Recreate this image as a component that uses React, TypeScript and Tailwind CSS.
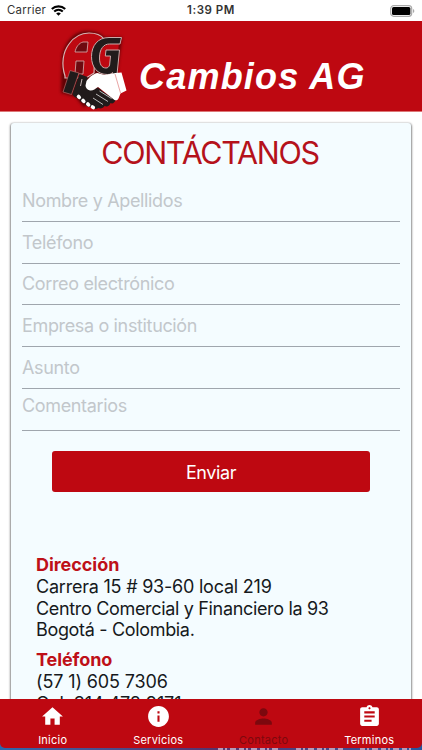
import { MdAssignment, MdHome, MdInfo, MdPerson } from 'react-icons/md';

const fields = [
    { name: 'nombre', label: 'Nombre y Apellidos', box: 'h-[42px] pb-[1px]' },
    { name: 'telefono', label: 'Teléfono', box: 'h-[42px] pb-[1px]' },
    { name: 'correo', label: 'Correo electrónico', box: 'h-[41px] pb-[1px]' },
    { name: 'empresa', label: 'Empresa o institución', box: 'h-[42px] pb-[1px]' },
    { name: 'asunto', label: 'Asunto', box: 'h-[42px] pb-[1px]' },
    { name: 'comentarios', label: 'Comentarios', box: 'h-[42px] pb-[9px]' },
];

const tabs = [
    { label: 'Inicio', icon: MdHome, active: false },
    { label: 'Servicios', icon: MdInfo, active: false },
    { label: 'Contacto', icon: MdPerson, active: true },
    { label: 'Terminos', icon: MdAssignment, active: false },
];

function StatusBar() {
    return (
        <div className="grid h-[21px] shrink-0 grid-cols-3 items-center bg-white px-[7px] pt-px text-[#333]">
            <div className="flex items-center gap-[5px]">
                <span className="text-[11.4px] tracking-[0.25px]">Carrier</span>
                <svg width="15" height="11" viewBox="0 0 15 11" fill="none" stroke="#000" strokeWidth="2.1">
                    <path d="M0.8 4.1C4.6 0.5 10.4 0.5 14.2 4.1" />
                    <path d="M3.2 6.6C5.7 4.3 9.3 4.3 11.8 6.6" />
                    <path d="M7.5 10.8L5.2 8.4C6.5 7.2 8.5 7.2 9.8 8.4Z" fill="#000" stroke="none" />
                </svg>
            </div>
            <span className="text-center text-[11.5px] font-semibold tracking-[0.55px]">1:39 PM</span>
            <svg className="justify-self-end" width="25" height="12" viewBox="0 0 25 12">
                <rect x="0.7" y="0.7" width="21" height="10.6" rx="3" fill="#fff" stroke="#aaa" strokeWidth="1.2" />
                <rect x="2" y="2" width="18.4" height="8" rx="1.6" fill="#000" />
                <path d="M23 4v4c1.8-.8 1.8-3.2 0-4z" fill="#aaa" />
            </svg>
        </div>
    );
}

// Monograma sobre el apretón de manos
function Logo() {
    return (
        <svg width="70" height="84" viewBox="0 0 70 84" className="shrink-0">
            <defs>
                <filter id="glow" x="-20%" y="-20%" width="140%" height="140%">
                    <feGaussianBlur stdDeviation="1.8" />
                </filter>
            </defs>
            <path
                d="M4 64L5 27C9 13 17 4 30 4c8 0 13 3 16 6h17l-5 37-20 20-12 11-8-10z"
                fill="#3a0306"
                stroke="#3a0306"
                strokeWidth="2"
                opacity="0.7"
                filter="url(#glow)"
            />
            {/* A */}
            <path
                d="M7 48C3 36 5 24 11 16 16 9 23 5 31 5c7 0 12 2 15 6l-9 12-1 22-8 5H7z"
                fill="#be0811"
                stroke="#d7b4b4"
                strokeWidth="1.2"
            />
            <path d="M17 24c1-5 4-9 8-10h5l-1 10zM18 33h8l-1 13h-8z" fill="#6d0a10" stroke="#d0a0a0" strokeWidth="0.9" />
            {/* G */}
            <path d="M50 16l11-1-3 30-12 1-9-8 1-14z" fill="#be0811" />
            <path
                d="M63.5 9.5H51c-11 0-17.500 8-17.500 19 0 11 6 18 16 18 3 0 4-1 5-2l-.5 2H59l2.500-24.500H48l-.7 6h5.200l-.9 9c-.8 2-1.800 3-3.600 3-4.500 0-6.500-4-6.500-10 0-9 4-14 10-14H62z"
                fill="#211b1b"
                stroke="#c9aaaa"
                strokeWidth="1"
            />
            {/* Mano izquierda */}
            <path d="M12 42.5l9 2.500-7.500 21.500L5 64z" fill="#211b1b" stroke="#b66" strokeWidth="0.7" />
            <path
                d="M21.5 46l8 3-1 10 6 3 5-2 18 12c-1 3-3 4-5 3-1 3-3 4-6 3-1 2-4 3-6 2-3 2-6 1-8-1-4 0-5-2-6-4-4 0-5-3-5-4-3-1-6-2-7-5z"
                fill="#211b1b"
            />
            <path d="M24 51l-1.5 7" stroke="#dcc" strokeWidth="0.9" />
            {/* Mano derecha */}
            <path
                d="M28.5 53c3-4 7-7.500 11-8l7 2 11-2 6-.5 5 18-6 3-2 5c-1 2-2.500 2-4 1.500L40 59c-3 2-5 4-8 3.500-3-.5-4.500-3-4.500-5z"
                fill="#fff"
            />
            <path d="M57 46l5.500 19" stroke="#e59a9a" strokeWidth="0.9" />
            <path d="M38 66l12 7.500M35 70l10 6.500M41.5 63l12 7.500" stroke="#ccc" strokeWidth="0.9" />
            <path
                d="M20.5 68.5l.8.9M25 72.5l.8.9M29.8 76l.8.9M34.5 79l.8.5"
                stroke="#fff"
                strokeWidth="3.6"
                strokeLinecap="round"
            />
        </svg>
    );
}

function Header() {
    return (
        <header className="flex h-[91px] shrink-0 items-start border-b border-[#d77] bg-[#be0811] pt-[7px] pl-[58px]">
            <Logo />
            <span className="mt-[29px] ml-[11px] font-['Liberation_Sans'] text-[36px] leading-[40px] font-bold tracking-[1.2px] whitespace-nowrap text-white italic">
                Cambios AG
            </span>
        </header>
    );
}

function ContactForm() {
    return (
        <form className="flex flex-col px-[11px]" onSubmit={(e) => e.preventDefault()}>
            {fields.map((field) => (
                <input
                    key={field.name}
                    name={field.name}
                    aria-label={field.label}
                    placeholder={field.label}
                    className={`border-b border-[#9fa6ad] text-[18px] tracking-[-0.35px] outline-none placeholder:text-[#c2c7cb] ${field.box}`}
                />
            ))}
            <button
                type="submit"
                className="mx-[30px] mt-[20px] h-[41px] rounded-[3px] bg-[#be0811] pt-px text-[18px] tracking-[-0.4px] text-white"
            >
                Enviar
            </button>
        </form>
    );
}

function Address() {
    return (
        <section className="mt-[62px] px-[25px] text-[18px] leading-[21.8px] tracking-[-0.33px] whitespace-nowrap text-[#16191c]">
            <h2 className="font-bold tracking-[-0.05px] text-[#be1018]">Dirección</h2>
            <p className="tracking-[-0.22px]">Carrera 15 # 93-60 local 219</p>
            <p>Centro Comercial y Financiero la 93</p>
            <p>Bogotá - Colombia.</p>
            <h2 className="mt-[8px] font-bold tracking-[-0.1px] text-[#be1018]">Teléfono</h2>
            <p className="tracking-[-0.13px]">(57 1) 605 7306</p>
            <p className="tracking-[-0.1px]">Cel: 314 478 9171</p>
        </section>
    );
}

function TabBar() {
    return (
        <nav className="h-[51px] shrink-0 bg-linear-to-r from-[#2b68ad] via-[#55346f] to-[#2457a0]">
            <div className="grid h-[49px] grid-cols-4 rounded-b-[5px] bg-[#be0811]">
                {tabs.map(({ label, icon: Icon, active }) => (
                    <button
                        key={label}
                        className={`flex flex-col items-center pt-[5px] ${active ? 'text-[#7c080e]' : 'text-white'}`}
                    >
                        <Icon size={25} />
                        <span className="mt-[4px] text-[11px] leading-[14px] tracking-[0.25px]">{label}</span>
                    </button>
                ))}
            </div>
            {/* Contenido que asoma bajo la barra */}
            <svg className="ml-[218px] block" width="198" height="2" viewBox="0 0 198 2">
                <path d="M0 1h62M78 1h48M142 1h54" stroke="#b59ab8" strokeWidth="2" strokeDasharray="5 2 2 3 6 3" />
            </svg>
        </nav>
    );
}

export default function App() {
    return (
        <div className="flex h-[750px] w-[422px] flex-col overflow-hidden bg-white font-[Inter,sans-serif]">
            <StatusBar />
            <Header />
            <main className="min-h-0 flex-1 overflow-hidden px-[11px] pt-[11px]">
                <div className="h-[640px] rounded-[3px] bg-[#f4fcff] shadow-[0_1px_2px_1px_rgba(0,0,0,0.45)]">
                    <h1 className="h-[57px] pt-[11px] pr-[2px] text-center text-[30.5px] leading-[38px] tracking-[-1.3px] text-[#b5121b]">
                        CONTÁCTANOS
                    </h1>
                    <ContactForm />
                    <Address />
                </div>
            </main>
            <TabBar />
        </div>
    );
}
